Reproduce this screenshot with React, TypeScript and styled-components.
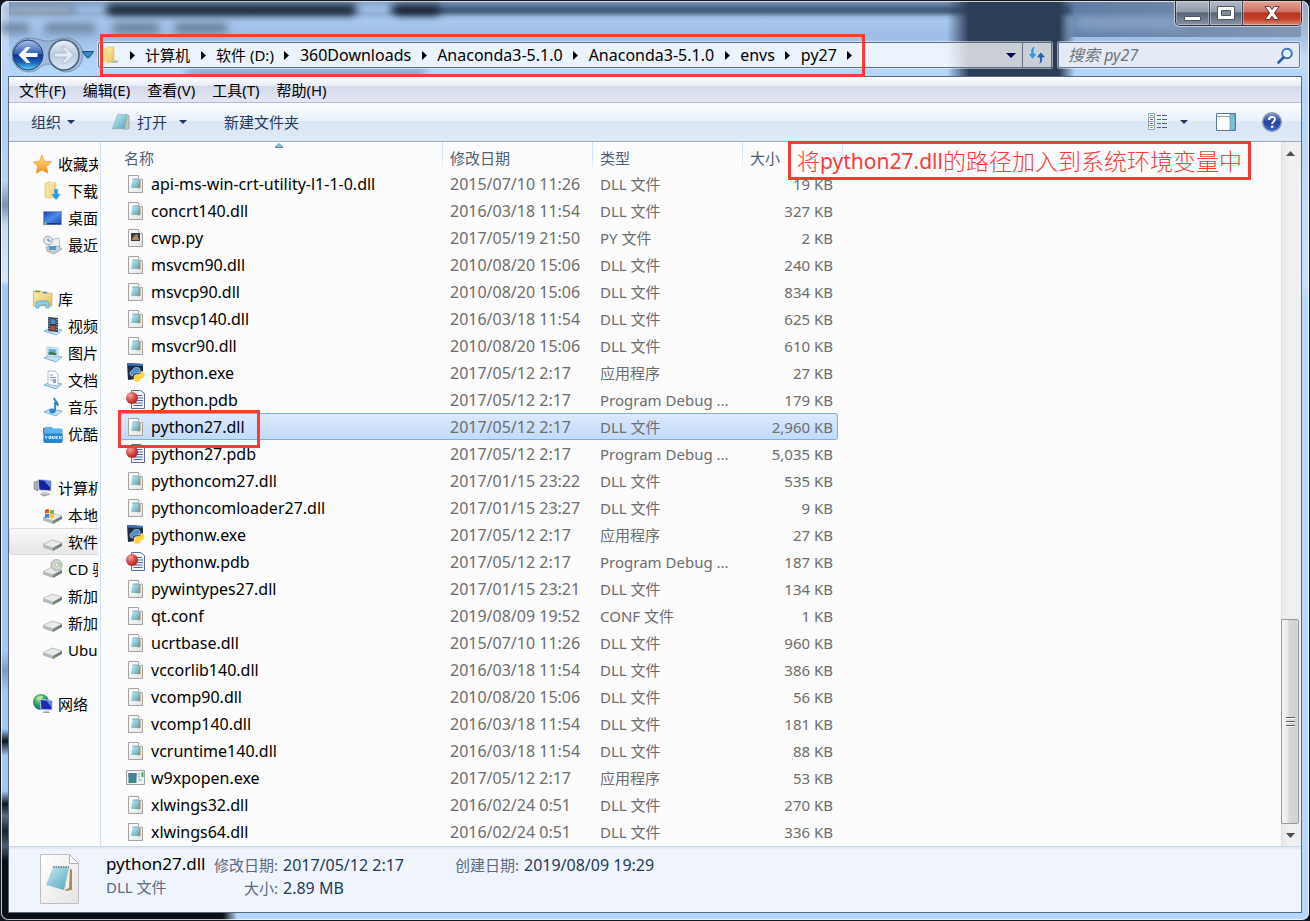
import React from "react";
import styled, { createGlobalStyle, css } from "styled-components";

const GlobalStyle = createGlobalStyle`
  * { box-sizing: border-box; }
  body {
    margin: 0;
    background: #10141c;
    font-family: "Noto Sans", "Noto Sans CJK SC", sans-serif;
    font-size: 15px;
    line-height: 20px;
    color: #000;
  }
  button { font: inherit; color: inherit; background: none; border: 0; padding: 0; margin: 0; }
  svg { display: block; flex: none; }
  a { color: inherit; text-decoration: none; }
`;

/* ---------- window frame ---------- */

const WindowFrame = styled.div`
  position: relative;
  isolation: isolate;
  overflow: hidden;
  min-height: 100vh;
  display: flex;
  flex-direction: column;
  padding: 0 7px 7px;
  border: 1px solid #14181f;
  border-radius: 8px;
  background: #abceF5;
`;

const Backdrop = styled.div`
  position: absolute;
  inset: 0;
  z-index: -1;
  border-radius: 7px;
  box-shadow: inset 0 0 0 1px rgba(255, 255, 255, 0.75);
  background:
    linear-gradient(90deg, #0b0e14 0 222px, transparent 236px) 0 100% / 100% 8px no-repeat,
    linear-gradient(180deg,
      #c3dbf5 0, #b3d0f2 130px, #b9d3ee 180px, #7d93ad 204px, #c8ddf4 225px, #d5e6f8 280px,
      #a4c8f4 285px, #a4c8f4 650px, #7d9cc4 670px, #a4c8f4 690px, #a4c8f4 728px,
      #10141c 740px, #a4c8f4 755px, #a4c8f4 790px, #11161f 803px, #5c6d80 815px,
      #1b222c 830px, #4e5c6c 845px, #0b0e14 860px) 0 0 / 8px 100% no-repeat,
    linear-gradient(180deg, #94a6bd 0, #a8bfdc 34px, #c4dcf6 60px, #b5d6fb 90px, #c6e0fb 280px, #b5d8fc 300px) 100% 0 / 8px 100% no-repeat,
    linear-gradient(90deg, transparent 946px, #2b3d57 968px, #2b3d57 1058px, transparent 1074px) 0 0 / 100% 76px no-repeat,
    linear-gradient(90deg, transparent 1066px, rgba(96, 126, 166, 0.95) 1074px, rgba(130, 148, 176, 0.9)) 0 0 / 100% 36px no-repeat,
    linear-gradient(180deg, #7f9cc0 0, #445d7e 8px, #47607f 11px, #98b8de 16px, #a9c9ef 20px, #9dbde6 34px, #b0d3f8 60px, #b5d8fc 76px);
`;

const Smudge = styled.span<{ $x: number; $y: number; $w: number; $h: number; $c: string }>`
  position: absolute;
  left: ${(p) => p.$x}px;
  top: ${(p) => p.$y}px;
  width: ${(p) => p.$w}px;
  height: ${(p) => p.$h}px;
  background: ${(p) => p.$c};
  filter: blur(4px);
`;

const smudges: [number, number, number, number, string][] = [
  [2, 4, 70, 10, "#a9bdd2"],
  [72, 3, 34, 12, "#a9c9ef"],
  [108, 5, 246, 9, "#1d2836"],
  [356, 2, 34, 13, "#a9c9ef"],
  [394, 5, 44, 9, "#141c28"],
  [0, 22, 28, 10, "#6c839f"],
  [44, 22, 50, 10, "#6c839f"],
  [112, 22, 46, 10, "#627995"],
  [174, 22, 52, 10, "#627995"],
  [186, 68, 238, 8, "#8099b8"],
  [1074, 16, 110, 12, "#86a0c4"],
];

const CaptionRow = styled.div`
  height: 31px;
  display: flex;
  justify-content: flex-end;
  align-items: flex-start;
`;

const CaptionGroup = styled.div`
  display: flex;
  border: 1px solid #2a323e;
  border-top: 0;
  border-radius: 0 0 5px 5px;
  box-shadow: 0 0 0 1px rgba(255, 255, 255, 0.55);
  overflow: hidden;
`;

const CaptionButton = styled.button<{ $close?: boolean }>`
  display: flex;
  align-items: center;
  justify-content: center;
  height: 24px;
  width: ${(p) => (p.$close ? 59 : 33)}px;
  background: linear-gradient(#b4bcc8, #8f99a9 45%, #566377 50%, #8793a6);
  box-shadow: inset 0 0 0 1px rgba(255, 255, 255, 0.35);
  & + & { border-left: 1px solid #3a4452; }
  ${(p) =>
    p.$close &&
    css`
      background: linear-gradient(#e3a79c, #cf7060 45%, #b8341d 50%, #c5402a 75%, #dd8a72);
    `}
`;

const NavRow = styled.div`
  height: 44px;
  padding: 2px 2px 0 4px;
  display: flex;
  align-items: center;
`;

const TravelGroup = styled.div`
  position: relative;
  display: flex;
  align-items: center;
  gap: 4px;
  width: 86px;
`;

const TravelPlate = styled.svg`
  position: absolute;
  left: 0;
  top: -2px;
`;

const TravelButton = styled.button`
  position: relative;
  width: 32px;
  height: 32px;
`;

const RecentButton = styled.button`
  position: relative;
  width: 12px;
  margin-left: -2px;
`;

const AddressBar = styled.div`
  position: relative;
  flex: 1;
  min-width: 0;
  height: 26px;
  display: flex;
  align-items: center;
  margin-right: 6px;
  border: 1px solid #5f6f83;
  border-radius: 2px;
  box-shadow: 0 0 0 1px rgba(255, 255, 255, 0.5);
  background: linear-gradient(90deg, #ebf4fe 0 840px, rgba(255, 255, 255, 0.75) 850px);
`;

const CrumbList = styled.nav`
  flex: 1;
  min-width: 0;
  display: flex;
  align-items: center;
  padding-left: 3px;
  white-space: nowrap;
`;

const Crumb = styled.a<{ $latin?: boolean }>`
  font-size: ${(p) => (p.$latin ? 16 : 15)}px;
`;

const CrumbArrow = styled.button`
  width: 26px;
  display: flex;
  justify-content: center;
`;

const AddressButton = styled.button<{ $divided?: boolean }>`
  align-self: stretch;
  width: ${(p) => (p.$divided ? 29 : 22)}px;
  display: flex;
  align-items: center;
  justify-content: center;
  ${(p) => p.$divided && "border-left: 1px solid #5f6f83;"}
`;

const SearchBox = styled.label`
  width: 242px;
  height: 26px;
  display: flex;
  align-items: center;
  padding: 0 5px 0 9px;
  border: 1px solid #66768b;
  border-radius: 2px;
  box-shadow: 0 0 0 1px rgba(255, 255, 255, 0.5);
  background: #e4ebf6;
`;

const SearchInput = styled.input`
  flex: 1;
  min-width: 0;
  padding: 0;
  border: 0;
  outline: 0;
  background: none;
  font: italic 16px/20px "Noto Sans", "Noto Sans CJK SC", sans-serif;
  &::placeholder { color: #6e737b; opacity: 1; }
`;

/* ---------- client area ---------- */

const Client = styled.div`
  flex: 1;
  display: flex;
  flex-direction: column;
  border: 1px solid #5a6b80;
  background: #fcfcfc;
`;

const MenuBar = styled.nav`
  height: 26px;
  display: flex;
  align-items: center;
  gap: 17px;
  padding: 0 10px 0;
  border-bottom: 1px solid #b6bccc;
  background: linear-gradient(#fff 0, #e6ebf5 9px, #d5daeb 9px, #e2e6f5 100%);
`;

const ToolBar = styled.div`
  height: 39px;
  display: flex;
  align-items: center;
  padding: 0 19px 0 22px;
  color: #1e395b;
  border-bottom: 1px solid #a0afc3;
  background: linear-gradient(#fafcff 0, #e9f1fb 18px, #dce6f4 18px, #dde8f6 34px, #e4effb 37px, #c8d8ea 38px);
`;

const ToolButton = styled.button<{ $gap?: number }>`
  display: flex;
  align-items: center;
  gap: 6px;
  margin-left: ${(p) => p.$gap ?? 0}px;
`;

const Spacer = styled.div`
  flex: 1;
`;

const Body = styled.div`
  flex: 1;
  display: flex;
`;

const Sidebar = styled.nav`
  width: 92px;
  flex: none;
  overflow: hidden;
  padding-top: 8px;
  padding-right: 2px;
  border-right: 1px solid #cfe1f5;
`;

const TreeGroup = styled.ul`
  list-style: none;
  margin: 0 0 27px;
  padding: 0;
`;

const TreeItem = styled.li<{ $root?: boolean; $active?: boolean }>`
  height: 27px;
  border: 1px solid transparent;
  border-right: 0;
  border-radius: 3px 0 0 3px;
  padding-left: ${(p) => (p.$root ? 23 : 33)}px;
  overflow: hidden;
  ${(p) =>
    p.$active &&
    css`
      border-color: #dadada;
      background: linear-gradient(#f9f9f9, #e6e6e6);
    `}
`;

const TreeLink = styled.a`
  display: flex;
  align-items: center;
  gap: 5px;
  height: 25px;
  white-space: nowrap;
`;

const FilePane = styled.main`
  position: relative;
  flex: 1;
  min-width: 0;
  padding-left: 19px;
`;

const FileTable = styled.table`
  width: 718px;
  table-layout: fixed;
  border-collapse: separate;
  border-spacing: 0;
`;

const HeadCell = styled.th<{ $w?: number; $first?: boolean }>`
  position: relative;
  height: 28px;
  width: ${(p) => (p.$w ? `${p.$w}px` : "auto")};
  padding: 4px 0 0 ${(p) => (p.$first ? 4 : 7)}px;
  text-align: left;
  vertical-align: middle;
  font-weight: 400;
  color: #4c607a;
  white-space: nowrap;
  &::after {
    content: "";
    position: absolute;
    right: 0;
    top: 0;
    width: 1px;
    height: 28px;
    background: linear-gradient(#cfe2f6, #dcebf9 70%, #fcfcfc);
  }
  &:last-child::after { right: -5px; }
`;

const SortMark = styled.svg`
  position: absolute;
  top: 1px;
  left: 155px;
`;

const Cell = styled.td<{ $kind?: "name" | "date" | "size" }>`
  height: 27px;
  padding: 0 5px 0 7px;
  border: 0 solid transparent;
  border-width: 1px 0;
  color: #6d6d6d;
  white-space: nowrap;
  ${(p) => p.$kind === "name" && "padding: 0 0 0 5px; color: #000; font-size: 16px; border-left-width: 1px;"}
  ${(p) => p.$kind === "date" && "font-size: 16px;"}
  ${(p) => p.$kind === "size" && "padding: 0 4px 0 0; text-align: right; border-right-width: 1px;"}
`;

const Row = styled.tr<{ $selected?: boolean }>`
  ${(p) =>
    p.$selected &&
    css`
      td {
        border-color: #84acdd;
        background: linear-gradient(#dce9fb, #c1dbfc);
        background-clip: padding-box;
      }
      td:first-child { border-radius: 3px 0 0 3px; }
      td:last-child { border-radius: 0 3px 3px 0; }
    `}
`;

const NameBox = styled.div`
  position: relative;
  display: flex;
  align-items: center;
  gap: 5px;
  height: 25px;
`;

/* red pen marks */
const RedFrame = styled.div<{ $l: number; $t: number; $w: number; $h: number }>`
  position: absolute;
  z-index: 2;
  left: ${(p) => p.$l}px;
  top: ${(p) => p.$t}px;
  width: ${(p) => p.$w}px;
  height: ${(p) => p.$h}px;
  border: 3px solid #f93a37;
  pointer-events: none;
`;

const RedNote = styled(RedFrame)`
  display: flex;
  align-items: center;
  justify-content: center;
  white-space: nowrap;
  color: #f93a37;
  font-size: 23px;
  line-height: 32px;
  font-weight: 300;
`;

const NoteLatin = styled.span`
  font-size: 21px;
  font-weight: 400;
`;

const ScrollBar = styled.div`
  width: 20px;
  flex: none;
  display: flex;
  flex-direction: column;
  padding-right: 2px;
  border-left: 1px solid #e3e3e3;
  background: linear-gradient(90deg, #e8e8e8, #f0f0f0 40%, #f0f0f0);
`;

const ScrollButton = styled.button`
  height: 22px;
  display: flex;
  align-items: center;
  justify-content: center;
`;

const ScrollTrack = styled.div`
  flex: 1;
  display: flex;
  flex-direction: column;
  justify-content: flex-end;
`;

const Thumb = styled.div`
  height: 31%;
  margin-left: -1px;
  display: flex;
  align-items: center;
  justify-content: center;
  border: 1px solid #979797;
  border-radius: 2px;
  background: linear-gradient(90deg, #f5f5f5, #e9e9eb 38%, #d8d9db 42%, #cfd0d2 90%, #e0e0e0);
`;

const Details = styled.footer`
  height: 66px;
  display: flex;
  align-items: flex-start;
  padding: 6px 0 0 30px;
  border-top: 1px solid #c9d7ea;
  box-shadow: inset 0 2px 1px #e0e9f6;
  background: #f0f4fc;
  color: #5a6a83;
`;

const DetailHead = styled.div`
  width: 101px;
  margin: 0 6px 0 25px;
  white-space: nowrap;
  line-height: 24px;
`;

const DetailTitle = styled.div`
  font-size: 17px;
  line-height: 22px;
  color: #000;
`;

const Facts = styled.dl`
  display: grid;
  grid-template-columns: 65px 166px 65px auto;
  column-gap: 5px;
  grid-auto-rows: 23px;
  margin: 2px 0 0;
  white-space: nowrap;
  dt { text-align: right; }
  dd { margin: 0; font-size: 16px; color: #1e395b; }
`;

/* ---------- icons ---------- */

const Caret = ({ color = "#1e395b", w = 8 }: { color?: string; w?: number }) => (
  <svg width={w} height={w / 2} viewBox="0 0 8 4"><path d="M0 0h8L4 4z" fill={color} /></svg>
);

const RightCaret = () => (
  <svg width="5" height="9" viewBox="0 0 5 9"><path d="M0 0v9l5-4.500z" fill="#000" /></svg>
);

const Defs = () => (
  <svg width="0" height="0" style={{ position: "absolute" }} aria-hidden="true">
    <defs>
      <linearGradient id="pad" x1="0" y1="0" x2="1" y2="1">
        <stop offset="0" stopColor="#cdeaf2" /><stop offset="1" stopColor="#4fa6bd" />
      </linearGradient>
      <linearGradient id="gold" x1="0" y1="0" x2="1" y2="1">
        <stop offset="0" stopColor="#fdf0b4" /><stop offset="1" stopColor="#e6bd52" />
      </linearGradient>
      <linearGradient id="star" x1="0" y1="0" x2="0" y2="1">
        <stop offset="0" stopColor="#ffe98a" /><stop offset="1" stopColor="#f08a1c" />
      </linearGradient>
      <linearGradient id="screen" x1="0" y1="0" x2="1" y2="1">
        <stop offset="0" stopColor="#1b3fb8" /><stop offset="0.5" stopColor="#4f8be8" /><stop offset="1" stopColor="#1a3fae" />
      </linearGradient>
      <linearGradient id="metal" x1="0" y1="0" x2="0" y2="1">
        <stop offset="0" stopColor="#f1f1f1" /><stop offset="1" stopColor="#8f9296" />
      </linearGradient>
      <linearGradient id="paper" x1="0" y1="0" x2="1" y2="1">
        <stop offset="0" stopColor="#fff" /><stop offset="1" stopColor="#e4e4e4" />
      </linearGradient>
      <radialGradient id="ball" cx="0.35" cy="0.3" r="0.8">
        <stop offset="0" stopColor="#f4a39b" /><stop offset="0.6" stopColor="#cf3d37" /><stop offset="1" stopColor="#a02020" />
      </radialGradient>
      <radialGradient id="globe" cx="0.4" cy="0.3" r="0.8">
        <stop offset="0" stopColor="#9fe08a" /><stop offset="0.5" stopColor="#2f9a6a" /><stop offset="1" stopColor="#1b4fa8" />
      </radialGradient>
      <linearGradient id="backBall" x1="0" y1="0" x2="0" y2="1">
        <stop offset="0" stopColor="#a8bfe4" /><stop offset="0.45" stopColor="#3763b5" />
        <stop offset="0.5" stopColor="#0d3290" /><stop offset="0.75" stopColor="#1a62bb" /><stop offset="1" stopColor="#5fd8f5" />
      </linearGradient>
      <linearGradient id="fwdBall" x1="0" y1="0" x2="0" y2="1">
        <stop offset="0" stopColor="#e8eef6" /><stop offset="0.5" stopColor="#bccbdf" /><stop offset="1" stopColor="#dce8f6" />
      </linearGradient>
      <linearGradient id="help" x1="0" y1="0" x2="0" y2="1">
        <stop offset="0" stopColor="#7f9be0" /><stop offset="0.5" stopColor="#2342a8" /><stop offset="1" stopColor="#3c68d8" />
      </linearGradient>
    </defs>
  </svg>
);

type FileKind = "dll" | "py" | "exe" | "pdb" | "app";

const FileIcon = ({ kind }: { kind: FileKind }) => {
  const sheet = (
    <>
      <path d="M2.500 1.500h10l4 4v13h-14z" fill="url(#paper)" stroke="#a3a3a3" />
      <path d="M12.500 1.500v4h4" fill="#fff" stroke="#b5b5b5" />
    </>
  );
  return (
    <svg width="20" height="20" viewBox="0 0 20 20">
      {kind === "dll" && (
        <>
          {sheet}
          <path d="M13 5l1.500 1v8l-3 .5z" fill="#a98d5a" />
          <path d="M6.500 5h7l-1.500 9H5z" fill="url(#pad)" />
          <path d="M6.500 5h7" stroke="#7a9aa4" strokeWidth="0.800" />
        </>
      )}
      {kind === "py" && (
        <>
          {sheet}
          <path d="M5 5h9v8H5z" fill="#3c3a38" />
          <path d="M6 11l3-4 3 2 1 3H6z" fill="#b08a5c" />
          <path d="M9 6l3 1-1 2z" fill="#7f9bb0" />
        </>
      )}
      {kind === "exe" && (
        <>
          <path d="M1 0l16 1v14L2 17z" fill="#1d2c47" />
          <path d="M1 0l16 1v2L1 2.500z" fill="#3b70c4" />
          <path d="M7 7.500c0-2 1-3 3.500-3S14 5.500 14 7v3H9.500C7 10 6.500 11.500 6.500 13 4.500 13 4 11.500 4 10S5 7.500 7 7.500z" fill="#4b8bc8" stroke="#d8e6f2" strokeWidth="0.600" />
          <path d="M15 8.500c2.500 0 3.500 1 3.500 3.200s-1 3.300-3 3.300h-1v1c0 2-1.200 3-3.500 3s-3-1-3-2.500V14c0-1.500 1-2.500 2.500-2.500H13c1.500 0 2-1 2-3z" fill="#ffd43b" stroke="#fff6cf" strokeWidth="0.500" />
        </>
      )}
      {kind === "pdb" && (
        <>
          <path d="M5.500.500h9l4 3v15h-13z" fill="#f3f5fb" stroke="#5a6c9c" />
          <path d="M8 5.500h8M8 8h9M8 10.500h9M7.500 13h9M7.500 15.500h9" stroke="#4a66ae" strokeWidth="1.200" />
          <circle cx="6" cy="8" r="6" fill="url(#ball)" />
        </>
      )}
      {kind === "app" && (
        <>
          <path d="M.500 2.500h18v14H.500z" fill="#f2f3f5" stroke="#9aa0a8" />
          <path d="M2.500 5h8v10h-8z" fill="#3d8b84" />
          <path d="M2.500 5h8v4h-8z" fill="#4b79a8" />
          <path d="M12 6h2M12 9h2M12 12h4" stroke="#b7bcc4" strokeWidth="1.500" />
          <path d="M16.500 4v5" stroke="#3aa34a" strokeWidth="1.800" />
        </>
      )}
    </svg>
  );
};

const Tray = () => <path d="M1 15l6-3 12 2-6 5z" fill="#c3e4f6" stroke="#5da3cd" strokeWidth="0.800" />;

const Drive = () => (
  <>
    <path d="M0 12.500l9-4.500 10 3-9 5z" fill="#e9eaeb" stroke="#9a9da0" strokeWidth="0.600" />
    <path d="M0 12.500l10 3.500v3L0 15.500z" fill="#b6b9bc" />
    <path d="M10 16l9-5v3l-9 5z" fill="#73777b" />
    <path d="M11.500 16.300l2-1v1.500l-2 1z" fill="#58c832" />
  </>
);

const TreeIcon = ({ name }: { name: string }) => (
  <svg width="20" height="20" viewBox="0 0 20 20">
    {name === "star" && (
      <path d="M9 1l2.600 6.200 7 .6-5.200 4.800 1.600 6.600L9 16l-5.600 3.300 1.200-6.800L.5 8l6-.8z" fill="url(#star)" stroke="#e39a35" strokeWidth="0.700" />
    )}
    {name === "download" && (
      <>
        <path d="M2 2l5-1.500v17L2 16z" fill="#f7e4a0" stroke="#d6b558" strokeWidth="0.600" />
        <path d="M7 1h6v16H7z" fill="url(#gold)" />
        <path d="M11 8h4v5h3l-5 6-5-6h3z" fill="#2b9be0" stroke="#bfe3f8" strokeWidth="0.500" />
      </>
    )}
    {name === "desktop" && (
      <>
        <path d="M.500 3.500h18v13H.500z" fill="url(#screen)" stroke="#7fa3cf" />
        <path d="M1 15h17v1.500H1z" fill="#1d3b78" /><circle cx="2.500" cy="15.500" r="1.200" fill="#6fd08a" />
      </>
    )}
    {name === "recent" && (
      <>
        <path d="M6 5l10-2 1 7-4 5-8-2z" fill="#edf1f4" stroke="#9aa5ae" strokeWidth="0.700" />
        <path d="M3 12l13-1 3 3-8 5-7-3z" fill="#c8cdd2" stroke="#84898e" strokeWidth="0.600" />
        <path d="M6 11h7v4H6z" fill="#4a9ccc" />
        <circle cx="5" cy="5.500" r="4.300" fill="#e4edf3" stroke="#8fa3b2" />
        <path d="M5 3v3h2.500" stroke="#5a7488" fill="none" strokeWidth="0.900" />
      </>
    )}
    {name === "library" && (
      <>
        <path d="M.500 2h8l1 2h9.500v13H.500z" fill="url(#gold)" stroke="#c9a548" strokeWidth="0.600" />
        <path d="M2 2.500h5" stroke="#4db04d" strokeWidth="1.500" /><path d="M10 3.500h4" stroke="#4a86d0" strokeWidth="1.500" />
        <path d="M3 19v-5.500l2-1.500h9l2 1.500V19h-3v-3H6v3z" fill="#8fcdee" stroke="#4f9dc8" strokeWidth="0.700" />
      </>
    )}
    {name === "video" && (
      <><Tray /><path d="M5 1l10 1v14L5 15z" fill="#2d3a4c" /><path d="M7.500 3l5 .4v4.800l-5-.4z" fill="#4d87c5" /><path d="M7.500 9.500l5 .4v4.600l-5-.4z" fill="#a8503d" /><path d="M6 2v13M14 3v12" stroke="#dbe4ec" strokeWidth="1" strokeDasharray="1.200 1.300" /></>
    )}
    {name === "picture" && (
      <><Tray /><path d="M4 4l11 1v9L4 13z" fill="#f4f8fa" stroke="#9cb2c0" strokeWidth="0.700" /><path d="M5.500 5.500l8 .7v6L5.500 11.700z" fill="#5cb4e0" /><path d="M5.500 9.500l3-1 5 2v1.700l-8-.5z" fill="#3e7c5c" /></>
    )}
    {name === "document" && (
      <><Tray /><path d="M5 1h7l3 3v12L5 14.500z" fill="#fafcfd" stroke="#9cabb8" strokeWidth="0.800" /><path d="M7 5h3M7 7.500h6M7 10h6" stroke="#8796b8" strokeWidth="1" /><path d="M10 9h3v4h-3z" fill="#8fa2d6" /></>
    )}
    {name === "music" && (
      <><Tray /><path d="M11 1c.5 3 4 3.500 4 7.500-1-2-2.500-2.500-3-2.500v7.500" fill="none" stroke="#2a80c4" strokeWidth="1.800" /><ellipse cx="9.500" cy="14" rx="3.200" ry="2.400" fill="#2f86cc" /></>
    )}
    {name === "youku" && (
      <>
        <path d="M0 4h8l1.500 2H18v4H0z" fill="#e14b4b" />
        <path d="M1.500 3H9l1.500 1.500H18A1.500 1.500 0 0119.500 6v11a2 2 0 01-2 2H2.500a2 2 0 01-2-2z" fill="#5cb2ea" />
        <path d="M.500 9.500h19V17a2 2 0 01-2 2h-15a2 2 0 01-2-2z" fill="#2685cc" />
        <path d="M2 12l1.200 1.500L4.400 12M3.200 13.500V15M6 12.500v2h2v-2zM9.500 12v2.500h1.700V12M13 12v3M15 12l-2 1.500 2 1.500M16.500 12v2.500H18V12" fill="none" stroke="#fff" strokeWidth="0.900" />
      </>
    )}
    {name === "computer" && (
      <>
        <path d="M1 4l4-1v10l-4-2z" fill="#a8b0b8" stroke="#737c86" strokeWidth="0.600" />
        <path d="M5 1.500l13 1v10.500L6 12z" fill="#16229c" stroke="#c9d0d6" />
        <path d="M11 2.500l6.500.5v7z" fill="#5c88f0" />
        <path d="M9 13l5 .5 4 3-7 2-4-2z" fill="url(#metal)" />
      </>
    )}
    {name === "system" && (
      <>
        <Drive />
        <path d="M2 5q2-1.500 4-.5v3.700q-2-.8-4 .5z" fill="#e2562a" /><path d="M6.800 4.800q2 1 4-.3v3.700q-2 1-4 .2z" fill="#77b82d" />
        <path d="M2 9.500q2-1.200 4-.5v3.700q-2-.8-4 .5z" fill="#3a80d2" /><path d="M6.800 9.300q2 1 4-.3v3.700q-2 1-4 .2z" fill="#f6c02a" />
      </>
    )}
    {name === "drive" && <Drive />}
    {name === "cd" && (
      <><Drive /><circle cx="13.500" cy="6" r="5.500" fill="#cfd5d4" stroke="#8f9694" strokeWidth="0.700" /><path d="M13.500 6l4-3.500a5.500 5.500 0 011 5z" fill="#a9d6a2" /><circle cx="13.500" cy="6" r="1.500" fill="#fff" stroke="#8f9694" strokeWidth="0.500" /></>
    )}
    {name === "network" && (
      <>
        <circle cx="8" cy="8" r="8" fill="url(#globe)" />
        <path d="M3 5q4-4 7-3-1 4-5 4z" fill="#b6ec8d" />
        <path d="M7 5.500l12 1V16L8 15.500z" fill="#1a2cb2" stroke="#c6ced6" /><path d="M13 6.500l5.500.5v6z" fill="#5c88f0" />
        <path d="M11 16h4l2 3h-7z" fill="url(#metal)" />
      </>
    )}
  </svg>
);

/* ---------- data ---------- */

const crumbs = ["计算机", "软件 (D:)", "360Downloads", "Anaconda3-5.1.0", "Anaconda3-5.1.0", "envs", "py27"];
const menus = ["文件(F)", "编辑(E)", "查看(V)", "工具(T)", "帮助(H)"];

const tree: [string, string][][] = [
  [["star", "收藏夹"], ["download", "下载"], ["desktop", "桌面"], ["recent", "最近"]],
  [["library", "库"], ["video", "视频"], ["picture", "图片"], ["document", "文档"], ["music", "音乐"], ["youku", "优酷"]],
  [
    ["computer", "计算机"], ["system", "本地磁"], ["drive", "软件"], ["cd", "CD 驱"],
    ["drive", "新加卷"], ["drive", "新加卷"], ["drive", "Ubu"],
  ],
  [["network", "网络"]],
];

const files: [FileKind, string, string, string, string][] = [
  ["dll", "api-ms-win-crt-utility-l1-1-0.dll", "2015/07/10 11:26", "DLL 文件", "19 KB"],
  ["dll", "concrt140.dll", "2016/03/18 11:54", "DLL 文件", "327 KB"],
  ["py", "cwp.py", "2017/05/19 21:50", "PY 文件", "2 KB"],
  ["dll", "msvcm90.dll", "2010/08/20 15:06", "DLL 文件", "240 KB"],
  ["dll", "msvcp90.dll", "2010/08/20 15:06", "DLL 文件", "834 KB"],
  ["dll", "msvcp140.dll", "2016/03/18 11:54", "DLL 文件", "625 KB"],
  ["dll", "msvcr90.dll", "2010/08/20 15:06", "DLL 文件", "610 KB"],
  ["exe", "python.exe", "2017/05/12 2:17", "应用程序", "27 KB"],
  ["pdb", "python.pdb", "2017/05/12 2:17", "Program Debug ...", "179 KB"],
  ["dll", "python27.dll", "2017/05/12 2:17", "DLL 文件", "2,960 KB"],
  ["pdb", "python27.pdb", "2017/05/12 2:17", "Program Debug ...", "5,035 KB"],
  ["dll", "pythoncom27.dll", "2017/01/15 23:22", "DLL 文件", "535 KB"],
  ["dll", "pythoncomloader27.dll", "2017/01/15 23:27", "DLL 文件", "9 KB"],
  ["exe", "pythonw.exe", "2017/05/12 2:17", "应用程序", "27 KB"],
  ["pdb", "pythonw.pdb", "2017/05/12 2:17", "Program Debug ...", "187 KB"],
  ["dll", "pywintypes27.dll", "2017/01/15 23:21", "DLL 文件", "134 KB"],
  ["dll", "qt.conf", "2019/08/09 19:52", "CONF 文件", "1 KB"],
  ["dll", "ucrtbase.dll", "2015/07/10 11:26", "DLL 文件", "960 KB"],
  ["dll", "vccorlib140.dll", "2016/03/18 11:54", "DLL 文件", "386 KB"],
  ["dll", "vcomp90.dll", "2010/08/20 15:06", "DLL 文件", "56 KB"],
  ["dll", "vcomp140.dll", "2016/03/18 11:54", "DLL 文件", "181 KB"],
  ["dll", "vcruntime140.dll", "2016/03/18 11:54", "DLL 文件", "88 KB"],
  ["app", "w9xpopen.exe", "2017/05/12 2:17", "应用程序", "53 KB"],
  ["dll", "xlwings32.dll", "2016/02/24 0:51", "DLL 文件", "270 KB"],
  ["dll", "xlwings64.dll", "2016/02/24 0:51", "DLL 文件", "336 KB"],
];

const selectedFile = "python27.dll";

/* ---------- page ---------- */

const Caption = () => (
  <CaptionRow>
    <CaptionGroup>
      <CaptionButton aria-label="最小化">
        <svg width="17" height="20" viewBox="0 0 17 20"><path d="M.500 13.500h16v4H.500z" fill="#fff" stroke="#4d5661" /></svg>
      </CaptionButton>
      <CaptionButton aria-label="最大化">
        <svg width="18" height="14" viewBox="0 0 18 14">
          <path d="M.500.500h17v13H.500z" fill="#fff" stroke="#4d5661" /><path d="M4.500 4.500h9v5h-9z" fill="#7d899a" stroke="#4d5661" />
        </svg>
      </CaptionButton>
      <CaptionButton $close aria-label="关闭">
        <svg width="16" height="14" viewBox="0 0 16 14">
          <path d="M1 .5h4.500L8 3.700 10.500.500H15L10.500 7l4.500 6.500h-4.500L8 10.200 5.500 13.500H1L5.500 7z" fill="#fff" stroke="#5a3a3a" />
        </svg>
      </CaptionButton>
    </CaptionGroup>
  </CaptionRow>
);

const Navigation = () => (
  <NavRow>
    <TravelGroup>
      <TravelPlate width="72" height="36" viewBox="0 0 72 36">
        <path d="M17 1C27 1 28 4 36 4S45 1 54 1a17 17 0 010 34C45 35 44 27 36 27S27 35 17 35A17 17 0 0117 1z" fill="rgba(140,160,190,0.450)" stroke="rgba(80,100,130,0.500)" />
      </TravelPlate>
      <TravelButton aria-label="后退">
        <svg width="32" height="32" viewBox="0 0 32 32">
          <circle cx="16" cy="16" r="15" fill="url(#backBall)" stroke="#23406f" />
          <path d="M6.500 16l8-8h4l-5 6h12v4h-12l5 6h-4z" fill="#fff" />
        </svg>
      </TravelButton>
      <TravelButton aria-label="前进">
        <svg width="32" height="32" viewBox="0 0 32 32">
          <circle cx="16" cy="16" r="15" fill="url(#fwdBall)" stroke="#4e5f78" strokeWidth="1.500" />
          <path d="M25.500 16l-8-8h-4l5 6h-12v4h12l-5 6h4z" fill="#e4ecf5" stroke="#a2b2c8" strokeWidth="0.800" />
        </svg>
      </TravelButton>
      <RecentButton aria-label="最近的页面">
        <svg width="12" height="8" viewBox="0 0 12 8"><path d="M.5.5h11L8 5.500 6 7 4 5.500z" fill="#2f8fc4" stroke="#17497e" /></svg>
      </RecentButton>
    </TravelGroup>
    <AddressBar>
      <CrumbList aria-label="路径">
        <svg width="17" height="18" viewBox="0 0 17 18">
          <path d="M13 14l4 1-2 2H9z" fill="#b9bdc0" />
          <path d="M1 1.500L6 3v14l-5-1.500z" fill="#f5dc85" /><path d="M5 1h7v14l-6 2z" fill="url(#gold)" stroke="#d8b65a" strokeWidth="0.500" />
        </svg>
        <CrumbArrow aria-label="展开"><RightCaret /></CrumbArrow>
        {crumbs.map((c, i) => (
          <React.Fragment key={i}>
            <Crumb href="#" $latin={i > 1}>{c}</Crumb>
            <CrumbArrow aria-label="展开"><RightCaret /></CrumbArrow>
          </React.Fragment>
        ))}
      </CrumbList>
      <AddressButton aria-label="历史记录"><Caret color="#00005c" w={10} /></AddressButton>
      <AddressButton $divided aria-label="刷新">
        <svg width="20" height="20" viewBox="0 0 18 18">
          <path d="M7 1C4 2 3 4 3.500 7.500H.5L5 13l4.500-5.500H6.500C6 5.500 6.500 3 8 1z" fill="#3c97d8" stroke="#e9f5fd" strokeWidth="0.600" />
          <path d="M11 17.500c2.500-1 3.500-3 3-6h3L12.500 6 8 11.500h3c.5 2.500.5 4-.5 6z" fill="#2e62b4" stroke="#e9f5fd" strokeWidth="0.600" />
        </svg>
      </AddressButton>
      <RedFrame $l={1} $t={-9} $w={765} $h={43} />
    </AddressBar>
    <SearchBox>
      <SearchInput type="text" placeholder="搜索 py27" aria-label="搜索 py27" />
      <svg width="17" height="17" viewBox="0 0 17 17">
        <circle cx="10" cy="6.500" r="4.800" fill="#eef6fd" stroke="#3a76be" strokeWidth="2" />
        <path d="M6.500 10.500L1.500 15.500" stroke="#2a5caa" strokeWidth="2.600" strokeLinecap="round" />
      </svg>
    </SearchBox>
  </NavRow>
);

const Tools = () => (
  <ToolBar>
    <ToolButton>组织<Caret /></ToolButton>
    <ToolButton $gap={37}>
      <svg width="19" height="18" viewBox="0 0 20 18">
        <path d="M15 1l3 1.500V16l-5 1z" fill="#c9c3b4" stroke="#8d8f8e" strokeWidth="0.600" />
        <path d="M6 1h10l-3 15H.5z" fill="url(#pad)" stroke="#79a9b5" strokeWidth="0.600" />
      </svg>
      打开
    </ToolButton>
    <ToolButton $gap={12} aria-label="打开方式"><Caret /></ToolButton>
    <ToolButton $gap={37}>新建文件夹</ToolButton>
    <Spacer />
    <ToolButton aria-label="更改视图">
      <svg width="20" height="18" viewBox="0 0 20 18">
        <path d="M.500.500h6v16h-6zM.500 4.500h6M.500 8.500h6M.500 12.500h6" fill="#fff" stroke="#8fa0b4" />
        <path d="M2 2.500h3" stroke="#5fa86a" /><path d="M2 6.500h3" stroke="#d23a3a" /><path d="M2 10.500h3" stroke="#3a6fd2" /><path d="M2 14.500h3" stroke="#98b82f" />
        <path d="M9 2.500h4M14 2.500h5M9 6.500h4M14 6.500h5M9 10.500h4M14 10.500h5M9 14.500h4M14 14.500h5" stroke="#52647a" />
      </svg>
    </ToolButton>
    <ToolButton $gap={12} aria-label="更多视图"><Caret /></ToolButton>
    <ToolButton $gap={28} aria-label="预览窗格">
      <svg width="20" height="18" viewBox="0 0 20 18">
        <path d="M.500.500h19v17H.500z" fill="#fff" stroke="#5e7897" /><path d="M1 3.500h13" stroke="#8fa5bd" />
        <path d="M14 1h5v16h-5z" fill="#7cbfda" stroke="#4d87a5" strokeWidth="0.600" />
      </svg>
    </ToolButton>
    <ToolButton $gap={26} aria-label="帮助">
      <svg width="20" height="20" viewBox="0 0 20 20">
        <circle cx="10" cy="10" r="9.300" fill="url(#help)" stroke="#8a97ad" strokeWidth="1.400" />
        <path d="M7 8c0-4 6-4 6-.7 0 2.200-2.800 2.200-2.800 4.700" fill="none" stroke="#fff" strokeWidth="2" /><circle cx="10.200" cy="14.700" r="1.300" fill="#fff" />
      </svg>
    </ToolButton>
  </ToolBar>
);

const Files = () => (
  <FilePane>
    <FileTable>
      <thead>
        <tr>
          <HeadCell $first>
            名称
            <SortMark width="8" height="5" viewBox="0 0 8 5"><path d="M0 4.500L4 .500l4 4z" fill="#8fc0dc" stroke="#3c6f95" strokeWidth="0.800" /></SortMark>
          </HeadCell>
          <HeadCell $w={150}>修改日期</HeadCell>
          <HeadCell $w={150}>类型</HeadCell>
          <HeadCell $w={95}>大小</HeadCell>
        </tr>
      </thead>
      <tbody>
        {files.map(([kind, name, date, type, size]) => (
          <Row key={name} $selected={name === selectedFile}>
            <Cell $kind="name">
              <NameBox>
                <FileIcon kind={kind} />
                {name}
                {name === selectedFile && <RedFrame $l={-8} $t={-4} $w={142} $h={38} />}
              </NameBox>
            </Cell>
            <Cell $kind="date">{date}</Cell>
            <Cell>{type}</Cell>
            <Cell $kind="size">{size}</Cell>
          </Row>
        ))}
      </tbody>
    </FileTable>
    <RedNote $l={687} $t={-1} $w={463} $h={39}>
      将<NoteLatin>python27.dll</NoteLatin>的路径加入到系统环境变量中
    </RedNote>
  </FilePane>
);

export default function App() {
  return (
    <>
      <GlobalStyle />
      <Defs />
      <WindowFrame>
        <Backdrop>
          {smudges.map(([x, y, w, h, c], i) => (
            <Smudge key={i} $x={x} $y={y} $w={w} $h={h} $c={c} />
          ))}
        </Backdrop>
        <Caption />
        <Navigation />
        <Client>
          <MenuBar aria-label="菜单">
            {menus.map((m) => <button key={m}>{m}</button>)}
          </MenuBar>
          <Tools />
          <Body>
            <Sidebar aria-label="导航窗格">
              {tree.map((group, g) => (
                <TreeGroup key={g}>
                  {group.map(([icon, label], i) => (
                    <TreeItem key={i} $root={i === 0} $active={g === 2 && i === 2}>
                      <TreeLink href="#"><TreeIcon name={icon} />{label}</TreeLink>
                    </TreeItem>
                  ))}
                </TreeGroup>
              ))}
            </Sidebar>
            <Files />
            <ScrollBar>
              <ScrollButton aria-label="向上"><svg width="9" height="5" viewBox="0 0 9 5"><path d="M0 5h9L4.500 0z" fill="#4a4f55" /></svg></ScrollButton>
              <ScrollTrack>
                <Thumb>
                  <svg width="9" height="11" viewBox="0 0 9 11"><path d="M0 1.500h9M0 5.500h9M0 9.500h9" stroke="#5b5f63" /><path d="M0 2.500h9M0 6.500h9M0 10.500h9" stroke="#fff" /></svg>
                </Thumb>
              </ScrollTrack>
              <ScrollButton aria-label="向下"><svg width="9" height="5" viewBox="0 0 9 5"><path d="M0 0h9L4.500 5z" fill="#4a4f55" /></svg></ScrollButton>
            </ScrollBar>
          </Body>
          <Details>
            <svg width="42" height="52" viewBox="0 0 42 52">
              <path d="M1.500 1.500h29l9 9v40h-38z" fill="url(#paper)" stroke="#bdbdbd" />
              <path d="M30.500 1.500v9h9z" fill="#fff" stroke="#b0b0b0" />
              <path d="M29 14l4 3v20l-7 1z" fill="#a58a5c" /><path d="M29 14l2 1-1 20-4 2z" fill="#f3efe4" />
              <path d="M14 14h16l-5 23-18-5z" fill="url(#pad)" /><path d="M14 14h16" stroke="#55707a" strokeWidth="1.500" strokeDasharray="1.500 1" />
            </svg>
            <DetailHead>
              <DetailTitle>python27.dll</DetailTitle>
              DLL 文件
            </DetailHead>
            <Facts>
              <dt>修改日期:</dt><dd>2017/05/12 2:17</dd>
              <dt>创建日期:</dt><dd>2019/08/09 19:29</dd>
              <dt>大小:</dt><dd>2.89 MB</dd>
            </Facts>
          </Details>
        </Client>
      </WindowFrame>
    </>
  );
}
